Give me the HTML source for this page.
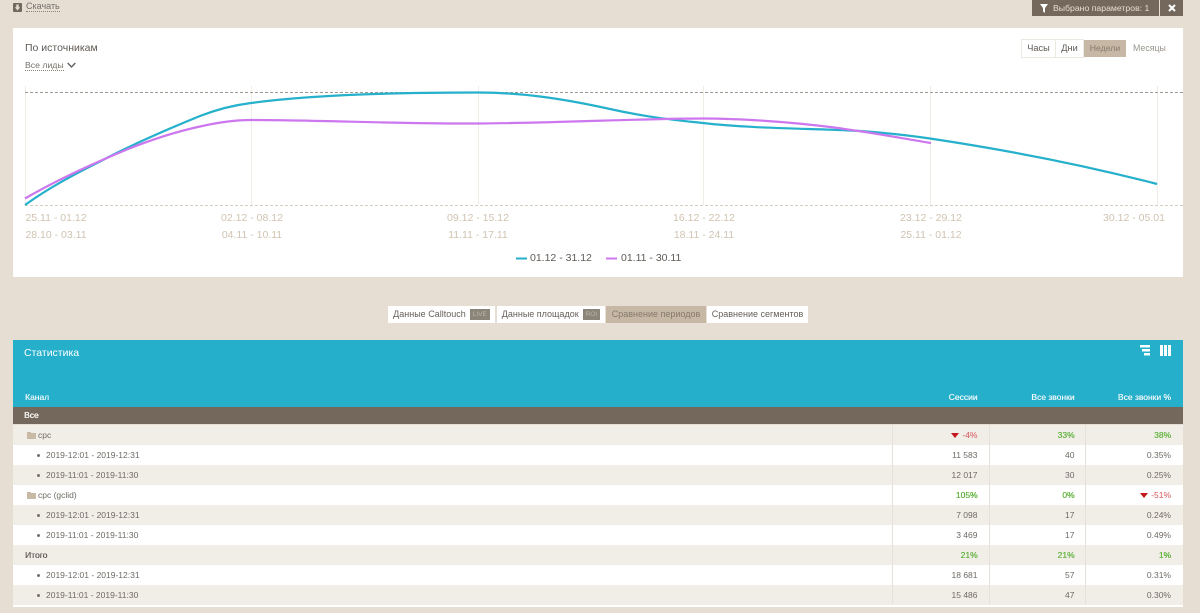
<!DOCTYPE html>
<html lang="ru"><head><meta charset="utf-8"><style>
html,body{margin:0;padding:0}
body{width:1200px;height:613px;overflow:hidden;position:relative;background:#e6ddd3;font-family:"Liberation Sans",sans-serif;color:#66605a;filter:blur(.3px)}
.a{position:absolute;white-space:nowrap}
.r{position:absolute;left:13px;width:1170px;height:20px;font-size:8.5px;line-height:20px;color:#6f6a64}
.b{background:#f1ede7}.w{background:#fff}
.c{position:absolute;top:0;text-align:right;width:90px}
.c1{left:874.500px}.c2{left:971.500px}.c3{left:1068px}
.t{position:absolute;left:33px}
.t:before{content:"";position:absolute;left:-9px;top:9px;width:3px;height:3px;border-radius:50%;background:#77706a}
.ge{color:#62b440;text-shadow:.3px 0 0 #62b440}.d{color:#d5555a}
.tri{display:inline-block;width:0;height:0;border-left:4px solid transparent;border-right:4px solid transparent;border-top:5px solid #c4161c;margin-right:3px}
.f{position:absolute;left:14px;top:8px;width:9px;height:6px;background:#c9baa6}
.f:before{content:"";position:absolute;left:0;top:-1px;width:4px;height:1px;background:#c9baa6}
.sep{position:absolute;top:425px;height:180px;width:1px;background:#e6e1da}
.x{position:absolute;font-size:10.500px;color:#d0c3b1;white-space:nowrap;text-align:center;width:100px}
.btn{position:absolute;top:0;height:17px;line-height:17px;background:#fff;font-size:9px;text-align:center;color:#66605a}
.tag{display:inline-block;background:#8a8479;color:#b9b4aa;font-size:6.500px;line-height:11px;height:11px;padding:0 3px;margin-left:4px;vertical-align:top;margin-top:3px}
.h{font-size:8.500px;line-height:11px;color:#eef8fa;text-align:right;text-shadow:.2px 0 0 #eef8fa;top:392px}
</style></head><body>
<svg class="a" style="left:13px;top:3px" width="9" height="9"><rect width="9" height="9" rx="1" fill="#73685b"/><path d="M3.300 1.500h2.400v2.800h1.500L4.500 7.500 1.800 4.300h1.500z" fill="#e6ddd3"/></svg>
<div class="a" style="left:26px;top:1px;font-size:9px;line-height:10px;color:#76706a;border-bottom:1px dotted #8a8479">Скачать</div>
<div class="a" style="left:1032px;top:0;width:127px;height:16px;background:#73685b"></div>
<div class="a" style="left:1160px;top:0;width:23px;height:16px;background:#73685b"></div>
<svg class="a" style="left:1040px;top:4px" width="8" height="9"><path d="M0 0h8L5 4V9L3 7.500V4z" fill="#fff"/></svg>
<div class="a" style="left:1053px;top:0;font-size:8.700px;line-height:16px;color:#e6ddd3">Выбрано параметров: 1</div>
<svg class="a" style="left:1168px;top:4px" width="8" height="8"><path d="M1 1L7 7M7 1L1 7" stroke="#fff" stroke-width="2"/></svg>

<div class="a" style="left:13px;top:28px;width:1170px;height:249px;background:#fff"></div>
<div class="a" style="left:25px;top:42px;font-size:10.500px;line-height:13px;color:#5f5a55">По источникам</div>
<div class="a" style="left:25px;top:60px;font-size:8.700px;line-height:10px;color:#76706a;border-bottom:1px dotted #8a8479">Все лиды</div>
<svg class="a" style="left:67px;top:62px" width="9" height="7"><path d="M.7 1L4.500 5 8.300 1" fill="none" stroke="#66605a" stroke-width="1.400"/></svg>

<div class="a" style="left:1022px;top:40px;width:33px;height:17px;background:#fff;box-shadow:0 0 0 1px #ece8e2;font-size:9.200px;line-height:17px;text-align:center;color:#5f5a55">Часы</div>
<div class="a" style="left:1056px;top:40px;width:27px;height:17px;background:#fff;box-shadow:0 0 0 1px #ece8e2;font-size:9.200px;line-height:17px;text-align:center;color:#5f5a55">Дни</div>
<div class="a" style="left:1084px;top:40px;width:42px;height:17px;background:#c7b8a5;font-size:8.700px;line-height:17px;text-align:center;color:#857a6c">Недели</div>
<div class="a" style="left:1133px;top:40px;font-size:8.800px;line-height:17px;color:#9a958e">Месяцы</div>

<svg class="a" style="left:0;top:0" width="1200" height="280">
<g stroke="#f0ece6" stroke-width="1"><path d="M25.500 86V205M251.500 86V205M478.500 86V205M703.500 86V205M930.500 86V205M1157.500 86V205"/></g>
<path d="M25 92.500H1183" stroke="#a09a92" stroke-dasharray="3 2" fill="none"/>
<path d="M25 205.500H1183" stroke="#d6ccbf" stroke-dasharray="3 2" fill="none"/>
<path d="M25 205C50 187 75 174 100 161.500C133 144 168 129 200 116C218 109 235 105 251 103C310 95 400 92.500 478 92.500C520 92.500 560 98 610 109C650 118 680 120.500 703 123C750 128.500 810 128.500 850 130.500C880 132 905 135 930 138.500C1000 149 1080 164 1157 184" fill="none" stroke="#25b0cc" stroke-width="2.200"/>
<path d="M25 198.500C50 184 75 172 100 161C133 146 165 134 200 126.500C220 122 235 120 251 120C320 120 400 124 478 123.500C560 123 640 118.500 703 118.500C740 118.500 790 122 830 127C870 132 900 138 931 143" fill="none" stroke="#cd77ef" stroke-width="2.200"/>
<path d="M516 258.500H527" stroke="#25b0cc" stroke-width="2"/>
<path d="M606 258.500H617" stroke="#cd77ef" stroke-width="2"/>
</svg>

<div class="x" style="left:6px;top:212px">25.11 - 01.12</div><div class="x" style="left:6px;top:229px">28.10 - 03.11</div>
<div class="x" style="left:202px;top:212px">02.12 - 08.12</div><div class="x" style="left:202px;top:229px">04.11 - 10.11</div>
<div class="x" style="left:428px;top:212px">09.12 - 15.12</div><div class="x" style="left:428px;top:229px">11.11 - 17.11</div>
<div class="x" style="left:654px;top:212px">16.12 - 22.12</div><div class="x" style="left:654px;top:229px">18.11 - 24.11</div>
<div class="x" style="left:881px;top:212px">23.12 - 29.12</div><div class="x" style="left:881px;top:229px">25.11 - 01.12</div>
<div class="x" style="left:1084px;top:212px">30.12 - 05.01</div>
<div class="a" style="left:530px;top:252px;font-size:10.500px;line-height:13px;color:#5f5a55">01.12 - 31.12</div>
<div class="a" style="left:621px;top:252px;font-size:10.500px;line-height:13px;color:#5f5a55">01.11 - 30.11</div>

<div class="a" style="left:387px;top:306px;width:421px;height:17px">
<div class="btn" style="left:1px;width:107px">Данные Calltouch<span class="tag">LIVE</span></div>
<div class="btn" style="left:110px;width:108px">Данные площадок<span class="tag">ROI</span></div>
<div class="btn" style="left:219px;width:100px;background:#c7b8a5;color:#857a6c">Сравнение периодов</div>
<div class="btn" style="left:320px;width:101px">Сравнение сегментов</div>
</div>

<div class="a" style="left:13px;top:340px;width:1170px;height:67px;background:#25afcb"></div>
<div class="a" style="left:24px;top:347px;font-size:10.500px;line-height:13px;color:#fff">Статистика</div>
<svg class="a" style="left:1139px;top:345px" width="34" height="12"><path d="M1 0H11V2.500H1zM3 4H11V6.500H3zM5 8H11V10.500H5zM21 0h3V11H21zM25 0h3V11H25zM29 0h3V11H29z" fill="#fff"/></svg>
<div class="a h" style="left:25px;text-align:left">Канал</div>
<div class="a h" style="left:900px;width:77.500px">Сессии</div>
<div class="a h" style="left:1000px;width:74.500px">Все звонки</div>
<div class="a h" style="left:1095px;width:76px">Все звонки %</div>
<div class="a" style="left:13px;top:407px;width:1170px;height:17px;background:#73685b"></div>
<div class="a" style="left:24px;top:409px;font-size:8.500px;line-height:12px;color:#fff;text-shadow:.3px 0 0 #fff">Все</div>

<div class="r b" style="top:425px"><i class="f"></i><span class="a" style="left:25px">cpc</span><div class="c c1 d"><i class="tri"></i>-4%</div><div class="c c2 ge">33%</div><div class="c c3 ge">38%</div></div>
<div class="r w" style="top:445px"><span class="t">2019-12:01 - 2019-12:31</span><div class="c c1">11 583</div><div class="c c2">40</div><div class="c c3">0.35%</div></div>
<div class="r b" style="top:465px"><span class="t">2019-11:01 - 2019-11:30</span><div class="c c1">12 017</div><div class="c c2">30</div><div class="c c3">0.25%</div></div>
<div class="r w" style="top:485px"><i class="f"></i><span class="a" style="left:25px">cpc (gclid)</span><div class="c c1 ge">105%</div><div class="c c2 ge">0%</div><div class="c c3 d"><i class="tri"></i>-51%</div></div>
<div class="r b" style="top:505px"><span class="t">2019-12:01 - 2019-12:31</span><div class="c c1">7 098</div><div class="c c2">17</div><div class="c c3">0.24%</div></div>
<div class="r w" style="top:525px"><span class="t">2019-11:01 - 2019-11:30</span><div class="c c1">3 469</div><div class="c c2">17</div><div class="c c3">0.49%</div></div>
<div class="r b" style="top:545px"><span class="a" style="left:12px;color:#66605a;text-shadow:.3px 0 0 #66605a">Итого</span><div class="c c1 ge">21%</div><div class="c c2 ge">21%</div><div class="c c3 ge">1%</div></div>
<div class="r w" style="top:565px"><span class="t">2019-12:01 - 2019-12:31</span><div class="c c1">18 681</div><div class="c c2">57</div><div class="c c3">0.31%</div></div>
<div class="r b" style="top:585px"><span class="t">2019-11:01 - 2019-11:30</span><div class="c c1">15 486</div><div class="c c2">47</div><div class="c c3">0.30%</div></div>
<div class="a" style="left:13px;top:605px;width:1170px;height:2px;background:#fff"></div>
<div class="sep" style="left:892px"></div><div class="sep" style="left:989px"></div><div class="sep" style="left:1085px"></div>
</body></html>
